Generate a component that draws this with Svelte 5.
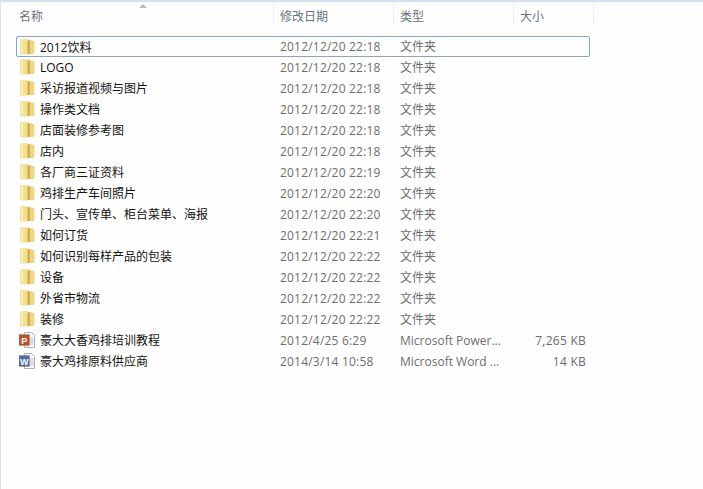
<script>
	const folders = [
		['2012饮料', '2012/12/20 22:18'],
		['LOGO', '2012/12/20 22:18'],
		['采访报道视频与图片', '2012/12/20 22:18'],
		['操作类文档', '2012/12/20 22:18'],
		['店面装修参考图', '2012/12/20 22:18'],
		['店内', '2012/12/20 22:18'],
		['各厂商三证资料', '2012/12/20 22:19'],
		['鸡排生产车间照片', '2012/12/20 22:20'],
		['门头、宣传单、柜台菜单、海报', '2012/12/20 22:20'],
		['如何订货', '2012/12/20 22:21'],
		['如何识别每样产品的包装', '2012/12/20 22:22'],
		['设备', '2012/12/20 22:22'],
		['外省市物流', '2012/12/20 22:22'],
		['装修', '2012/12/20 22:22']
	];
	const files = [
		{ name: '豪大大香鸡排培训教程', date: '2012/4/25 6:29', type: 'Microsoft Power...', size: '7,265 KB', letter: 'P', color: '#c0502a' },
		{ name: '豪大鸡排原料供应商', date: '2014/3/14 10:58', type: 'Microsoft Word ...', size: '14 KB', letter: 'W', color: '#4f6ba6' }
	];
</script>

{#snippet folderIcon()}
	<svg class="icon" viewBox="0 0 16 16" aria-hidden="true">
		<path d="M2 .5h7l5.500 1.500 1 1v10.500l-1 1.500H2l-1-1V1.500z" fill="#ecd27e" />
		<path d="M1 1.500l1-1h6.500v15H2l-1-1z" fill="#f3df92" />
		<path d="M2 1.500h2v13H2z" fill="#f9edb8" />
		<path d="M8.500 1.500h2.500v13l-2.500 1z" fill="#d0ad52" />
		<path d="M11 2.500h4v11l-4 1z" fill="#efd684" />
	</svg>
{/snippet}

{#snippet docIcon(letter, color)}
	<svg class="icon" viewBox="0 0 16 16" aria-hidden="true">
		<path d="M5.500 .5h7l3 3v12h-10z" fill="#fdfdfd" stroke="#a9b0b8" />
		<path d="M11 6h3.500M11 8h3.500M11 10h3.500M11 12h3.500" stroke="#b4bac2" />
		<rect x="0" y="2.500" width="10.500" height="11" fill={color} stroke="#8a8a8a" stroke-width="0.500" />
		<text x="5.200" y="11.500" text-anchor="middle" class="letter">{letter}</text>
	</svg>
{/snippet}

<div class="window">
	<header class="head">
		<div class="col name">名称<span class="sort"></span></div>
		<div class="col date">修改日期</div>
		<div class="col type">类型</div>
		<div class="col size">大小</div>
	</header>

	<div class="list">
		{#each folders as [name, date], i}
			<div class="row" class:focused={i === 0}>
				<div class="cell name">{@render folderIcon()}<span class="label">{name}</span></div>
				<div class="cell date">{date}</div>
				<div class="cell type">文件夹</div>
				<div class="cell size"></div>
			</div>
		{/each}
		{#each files as f}
			<div class="row">
				<div class="cell name">{@render docIcon(f.letter, f.color)}<span class="label">{f.name}</span></div>
				<div class="cell date">{f.date}</div>
				<div class="cell type">{f.type}</div>
				<div class="cell size">{f.size}</div>
			</div>
		{/each}
	</div>
</div>

<style>
	:global(body) {
		background: #fff;
	}

	.window {
		width: 703px;
		height: 489px;
		box-sizing: border-box;
		background: #fefefe;
		border-top: 2px solid #d3e1ee;
		border-left: 1px solid #d6e4f0;
		font-family: 'Open Sans', 'Noto Sans CJK SC', sans-serif;
		font-size: 12px;
		overflow: hidden;
	}

	.head {
		display: flex;
		height: 22px;
		margin-left: 15px;
		color: #68737e;
	}

	.col {
		box-sizing: border-box;
		height: 22px;
		padding-top: 6px;
		line-height: 17px;
		border-right: 1px solid #e8eef4;
		position: relative;
	}

	.col.name {
		width: 258px;
		padding-left: 3px;
	}

	.col.date,
	.col.type,
	.col.size {
		width: 120px;
		padding-left: 6px;
	}

	.col.size {
		width: 80px;
	}

	.sort {
		position: absolute;
		left: 123px;
		top: 2px;
		border-left: 4px solid transparent;
		border-right: 4px solid transparent;
		border-bottom: 4px solid #a9bfd4;
	}

	.list {
		margin: 12px 0 0 15px;
		width: 574px;
		display: flex;
		flex-direction: column;
		gap: 1px;
	}

	.row {
		box-sizing: border-box;
		display: flex;
		height: 20px;
		border: 1px solid transparent;
		border-radius: 2px;
		line-height: 18px;
	}

	.row.focused {
		height: 21px;
		margin-bottom: -1px;
		border-color: #86a6c6;
	}

	.cell {
		color: #6d6d6d;
		white-space: nowrap;
		padding-top: 1px;
	}

	.cell.name {
		width: 256px;
		display: flex;
		align-items: center;
		color: #111;
		padding-top: 0;
	}

	.cell.date {
		width: 120px;
		padding-left: 7px;
		box-sizing: border-box;
		letter-spacing: 0.2px;
	}

	.cell.type {
		width: 120px;
		padding-left: 7px;
		box-sizing: border-box;
	}

	.cell.size {
		width: 73px;
		text-align: right;
		letter-spacing: 0.25px;
	}

	.icon {
		width: 16px;
		height: 16px;
		margin-left: 2px;
		flex: none;
	}

	.label {
		margin-left: 5px;
		padding-top: 2px;
	}

	.letter {
		font-family: 'Liberation Sans', sans-serif;
		font-size: 9px;
		font-weight: 700;
		fill: #fff;
	}
</style>
